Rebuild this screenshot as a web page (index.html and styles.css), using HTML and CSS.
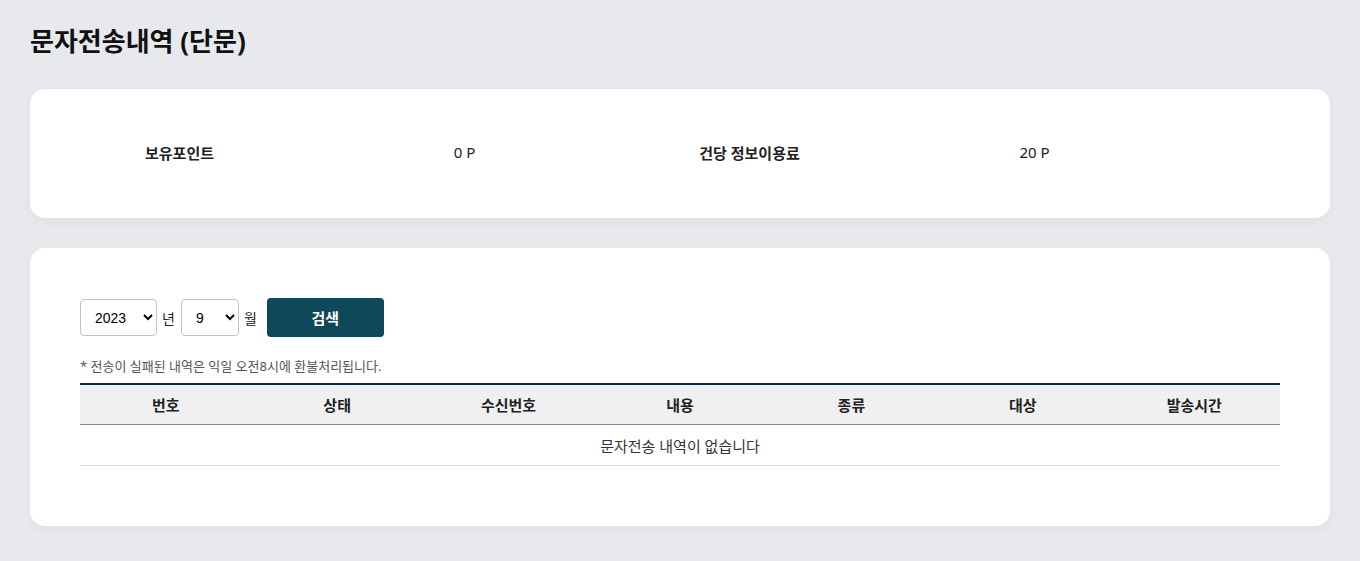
FILE: index.html
```html
<!DOCTYPE html>
<html lang="ko">
<head>
    <meta charset="UTF-8">
    <meta name="viewport" content="width=device-width, initial-scale=1.0">
    <title>문자전송내역 (단문)</title>
    <link rel="stylesheet" href="styles.css">
</head>
<body>
    <div class="page">
        <h1 class="page-title">문자전송내역 (단문)</h1>

        <!-- 포인트 정보 -->
        <div class="card point-card">
            <div class="point-grid">
                <div class="point-label">보유포인트</div>
                <div class="point-value">0 P</div>
                <div class="point-label">건당 정보이용료</div>
                <div class="point-value">20 P</div>
            </div>
        </div>

        <!-- 전송 내역 -->
        <div class="card list-card">
            <form class="search-form" onsubmit="return false;">
                <select class="sel-year">
                    <option>2023</option>
                    <option>2022</option>
                </select>
                <span class="unit">년</span>
                <select class="sel-month">
                    <option>9</option>
                    <option>8</option>
                </select>
                <span class="unit">월</span>
                <button type="submit" class="btn-search">검색</button>
            </form>

            <p class="notice">* 전송이 실패된 내역은 익일 오전8시에 환불처리됩니다.</p>

            <table class="sms-table">
                <thead>
                    <tr>
                        <th>번호</th>
                        <th>상태</th>
                        <th>수신번호</th>
                        <th>내용</th>
                        <th>종류</th>
                        <th>대상</th>
                        <th>발송시간</th>
                    </tr>
                </thead>
                <tbody>
                    <tr>
                        <td colspan="7">문자전송 내역이 없습니다</td>
                    </tr>
                </tbody>
            </table>
        </div>
    </div>
</body>
</html>
```

FILE: styles.css
```css
body {
    margin: 0;
    padding: 0;
    background-color: #e8e9ec;
    font-family: "Noto Sans", "Noto Sans CJK KR", sans-serif;
    color: #222;
}

.page {
    padding: 24px 30px 30px;
}

.page-title {
    margin: 0 0 30px;
    font-size: 26px;
    line-height: 35px;
    font-weight: 700;
    color: #111;
}

.card {
    background-color: #fff;
    border-radius: 15px;
    box-shadow: 0px 4px 12px rgba(0, 0, 0, 0.04);
}

.point-card {
    height: 129px;
    display: flex;
    align-items: center;
    margin-bottom: 30px;
}

.point-grid {
    display: grid;
    grid-template-columns: repeat(4, 285px);
    padding-left: 7px;
    margin-bottom: 3px;
    font-size: 15px;
    text-align: center;
}

.point-label {
    font-weight: 700;
    color: #222;
}

.point-value {
    color: #222;
}

.list-card {
    padding: 50px 50px 60px;
}

.search-form {
    display: flex;
    align-items: center;
}

select {
    height: 37px;
    border: 1px solid #c4c4c4;
    border-radius: 4px;
    background-color: #fff;
    font-family: "Liberation Sans", Arial, sans-serif;
    font-size: 14px;
    color: #000;
    padding: 0 4px 0 10px;
}

.sel-year {
    width: 77px;
}

.sel-month {
    width: 58px;
}

.unit {
    font-size: 14px;
    margin: 0 6px 0 5px;
    color: #222;
}

.btn-search {
    margin-left: 4px;
    width: 117px;
    height: 39px;
    border: none;
    border-radius: 4px;
    background-color: #0f4858;
    color: #fff;
    font-family: "Noto Sans", "Noto Sans CJK KR", sans-serif;
    font-size: 15px;
    font-weight: 700;
    cursor: pointer;
}

.notice {
    margin: 18px 0 5px;
    font-size: 13px;
    line-height: 23px;
    color: #555;
}

.sms-table {
    width: 100%;
    border-collapse: collapse;
    table-layout: fixed;
    font-size: 15px;
}

.sms-table th {
    height: 39px;
    padding: 0;
    background-color: #f0f0f0;
    border-top: 2px solid #0c2a36;
    border-bottom: 1px solid #888;
    font-weight: 700;
    color: #222;
}

.sms-table td {
    height: 40px;
    padding: 0;
    text-align: center;
    border-bottom: 1px solid #ddd;
    color: #333;
}
```
